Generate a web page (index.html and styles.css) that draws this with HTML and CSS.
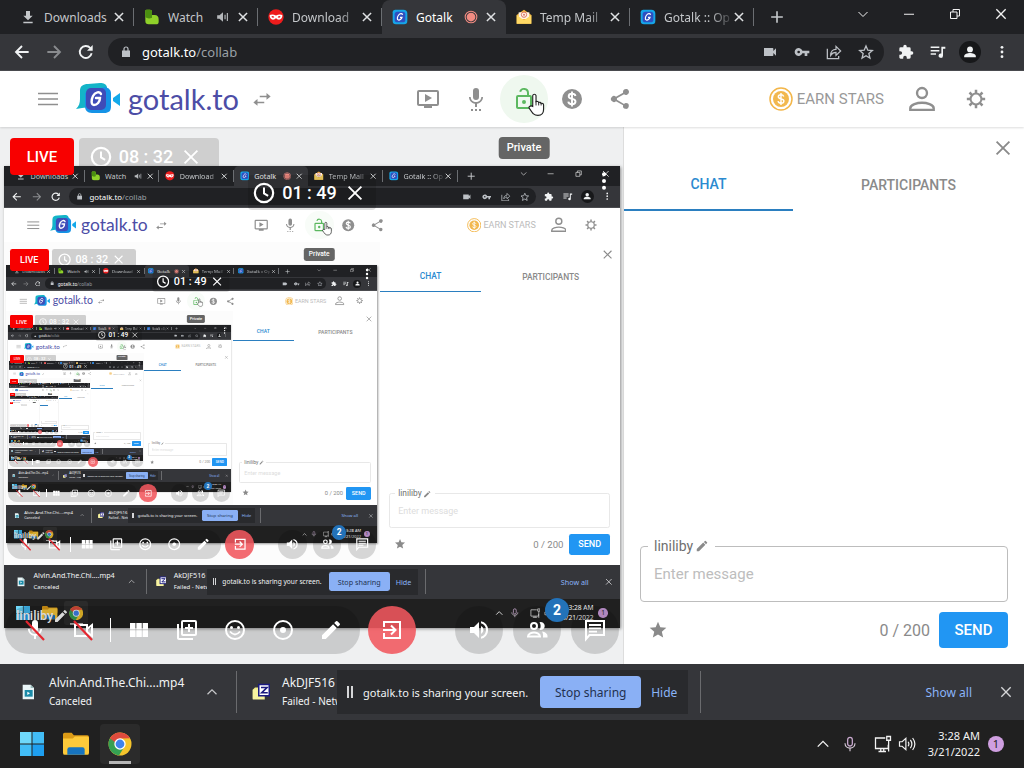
FILE: index.html
```html
<!DOCTYPE html>
<html lang="en">
<head>
<meta charset="utf-8">
<meta name="viewport" content="width=device-width, initial-scale=1">
<title>Gotalk</title>
<link rel="stylesheet" href="styles.css">
</head>
<body>
<svg class="sprite" aria-hidden="true">
  <symbol id="i-x" viewBox="0 0 24 24"><path d="M5 5L19 19M19 5L5 19" fill="none" stroke="currentColor" stroke-width="2.6"/></symbol>
  <symbol id="i-xthin" viewBox="0 0 24 24"><path d="M5 5L19 19M19 5L5 19" fill="none" stroke="currentColor" stroke-width="2"/></symbol>
  <symbol id="i-download" viewBox="0 0 24 24"><path d="M5 19h14v2.5H5zM19 10h-4V3H9v7H5l7 7z" fill="currentColor"/></symbol>
  <symbol id="i-green" viewBox="0 0 24 24"><path d="M2 3q0-2 2-2h5q3 0 3 3v5h4q6 0 6 7v3q0 4-4 4H7q-5 0-5-5z" fill="#8fd12a"/><path d="M2 3q0-2 2-2h5q3 0 3 3v9c-4 2-8 1-10-1z" fill="#4a8f10"/></symbol>
  <symbol id="i-mask" viewBox="0 0 24 24"><circle cx="12" cy="12" r="11.5" fill="#ee1c1c"/><path d="M2.500 9c3-1.500 6-1 9.500.6C15.500 8 18.500 7.500 21.500 9c.5 4-2 7-5 7-2 0-3.200-1-4.500-2.500C10.700 15 9.500 16 7.500 16c-3 0-5.500-3-5-7z" fill="#fff"/><path d="M5 11.500q2.500-2 4.500.8-2.500 1.600-4.500-.8zM14.500 12.300q2-2.800 4.500-.8-2 2.400-4.500.8z" fill="#ee1c1c"/></symbol>
  <symbol id="i-g" viewBox="0 0 24 24"><path d="M1 5q0-4 4-4h12q6 0 6 6v11q0 5-5 5H6q-5 0-5-5z" fill="#16a5e8"/><rect x="4" y="4" width="16" height="16" rx="4" fill="#2f4fc0"/><path d="M16 8.500c-1-2-4-2-6 .5s-3 7-.5 7.500 5-2 5.500-4h-3" fill="none" stroke="#fff" stroke-width="1.800"/></symbol>
  <symbol id="i-mail" viewBox="0 0 24 24"><path d="M1 9L12 1l11 8v13H1z" fill="#f2b63c"/><path d="M4 5h16v10H4z" fill="#fff3e4"/><circle cx="12" cy="8.500" r="4" fill="none" stroke="#d9776b" stroke-width="1.500"/><circle cx="12" cy="8.500" r="1.500" fill="#d9776b"/><path d="M1 9l11 8 11-8v13H1z" fill="#ffd965"/></symbol>
  <symbol id="i-rec" viewBox="0 0 24 24"><circle cx="12" cy="12" r="10" fill="none" stroke="#f28b82" stroke-width="1.800"/><circle cx="12" cy="12" r="7.500" fill="#f28b82"/></symbol>
  <symbol id="i-vol" viewBox="0 0 24 24"><path d="M2 9v6h4l6 5V4L6 9z" fill="currentColor"/><path d="M15.500 8v8M19.500 5v14" stroke="currentColor" stroke-width="2" fill="none"/></symbol>
  <symbol id="i-plus" viewBox="0 0 24 24"><path d="M12 2v20M2 12h20" stroke="currentColor" stroke-width="2.800"/></symbol>
  <symbol id="i-down" viewBox="0 0 24 24"><path d="M3 8l9 9 9-9" fill="none" stroke="currentColor" stroke-width="2"/></symbol>
  <symbol id="i-up" viewBox="0 0 24 24"><path d="M3 16.500l9-9 9 9" fill="none" stroke="currentColor" stroke-width="2.400"/></symbol>
  <symbol id="i-min" viewBox="0 0 24 24"><path d="M2 12.500h20" stroke="currentColor" stroke-width="2"/></symbol>
  <symbol id="i-max" viewBox="0 0 24 24"><path d="M3 8h13v13H3zM8 8V3h13v13h-5" fill="none" stroke="currentColor" stroke-width="2"/></symbol>
  <symbol id="i-back" viewBox="0 0 24 24"><path d="M22 12H3M12 3l-9 9 9 9" fill="none" stroke="currentColor" stroke-width="2.800"/></symbol>
  <symbol id="i-fwd" viewBox="0 0 24 24"><path d="M2 12h19M12 3l9 9-9 9" fill="none" stroke="currentColor" stroke-width="2.800"/></symbol>
  <symbol id="i-reload" viewBox="0 0 24 24"><path d="M20.500 14A9 9 0 1 1 18.500 6" fill="none" stroke="currentColor" stroke-width="2.800"/><path d="M22 1.500V10h-8.500z" fill="currentColor"/></symbol>
  <symbol id="i-lockc" viewBox="0 0 24 24"><path d="M4 9h16v13H4z" fill="currentColor"/><path d="M8 10V6a4 4 0 0 1 8 0v4" fill="none" stroke="currentColor" stroke-width="2.400"/></symbol>
  <symbol id="i-cam" viewBox="0 0 24 24"><path d="M17 10.500V7a1 1 0 0 0-1-1H3v12h13a1 1 0 0 0 1-1v-3.500l4 4v-11z" fill="currentColor"/></symbol>
  <symbol id="i-key" viewBox="0 0 24 24"><path d="M12.600 10A6 6 0 1 0 12.600 14H16v4h4v-4h3v-4zM7 14a2 2 0 1 1 0-4 2 2 0 0 1 0 4z" fill="currentColor"/></symbol>
  <symbol id="i-share" viewBox="0 0 24 24"><path d="M2 7v15h17v-4" fill="none" stroke="currentColor" stroke-width="1.900"/><path d="M7 17c0-6 3-9 8-9V3.500l7 7-7 6.500v-4.500c-4 0-6 1-8 4.500z" fill="none" stroke="currentColor" stroke-width="1.800"/></symbol>
  <symbol id="i-staro" viewBox="0 0 24 24"><path d="M12 3l2.700 6.300 6.800.6-5.200 4.500 1.600 6.700-5.900-3.600-5.900 3.600 1.600-6.700L2.500 9.900l6.800-.6z" fill="none" stroke="currentColor" stroke-width="2"/></symbol>
  <symbol id="i-star" viewBox="0 0 24 24"><path d="M12 17.300L18.200 21l-1.600-7L22 9.200l-7.200-.6L12 2 9.200 8.600 2 9.200 7.500 14l-1.700 7z" fill="currentColor"/></symbol>
  <symbol id="i-puzzle" viewBox="0 0 24 24"><path d="M20.500 11H19V7a2 2 0 0 0-2-2h-4V3.500a2.500 2.500 0 0 0-5 0V5H4a2 2 0 0 0-2 2v3.800h1.500a2.700 2.700 0 0 1 0 5.400H2V20c0 1.100.9 2 2 2h3.800v-1.500a2.700 2.700 0 0 1 5.400 0V22H17a2 2 0 0 0 2-2v-4h1.500a2.500 2.500 0 0 0 0-5z" fill="currentColor"/></symbol>
  <symbol id="i-music" viewBox="0 0 24 24"><path d="M1 5h13M1 10h13M1 15h8" stroke="currentColor" stroke-width="2.200"/><path d="M17 4h6v3h-3.500v10.500a3.300 3.300 0 1 1-2.500-3.200z" fill="currentColor"/></symbol>
  <symbol id="i-user" viewBox="0 0 24 24"><circle cx="12" cy="7.500" r="5" fill="currentColor"/><path d="M2 21v-2c0-4 6-5.500 10-5.500S22 15 22 19v2z" fill="currentColor"/></symbol>
  <symbol id="i-dots" viewBox="0 0 24 24"><circle cx="12" cy="4" r="2.400" fill="currentColor"/><circle cx="12" cy="12" r="2.400" fill="currentColor"/><circle cx="12" cy="20" r="2.400" fill="currentColor"/></symbol>
  <symbol id="i-menu" viewBox="0 0 24 24"><path d="M2 6.500h20M2 12h20M2 17.500h20" stroke="currentColor" stroke-width="1.600"/></symbol>
  <symbol id="i-logo" viewBox="0 0 44 32"><path d="M0 26c3-3 4-6 4-10V8c0-5 3-7 8-7l12-1c4 0 6 1 7 4v18L6 25z" fill="#14b4c8"/><path d="M9 10L29 4c4 1 6 3 6 7v12c0 5-2 7-7 7H16c-5 0-7-3-7-7z" fill="#1593e6"/><path d="M37 15l7-5v13l-7-5z" fill="#13a9ea"/><rect x="10" y="5" width="20" height="22" rx="5" fill="#3f4cb8"/><path d="M25 11c-1-3-6-2-8 2s-2 9 1 9 6-3 6-7h-4" fill="none" stroke="#fff" stroke-width="2.400" stroke-linecap="round"/></symbol>
  <symbol id="i-swap" viewBox="0 0 24 24"><path d="M9 7.500h9V4l5.500 4.500L18 13V9.500H9zM15 17.500H6V21L.5 16.500 6 12v3.500h9z" fill="currentColor"/></symbol>
  <symbol id="i-tv" viewBox="0 0 24 24"><path d="M21 3H3a2 2 0 0 0-2 2v12c0 1.100.9 2 2 2h5v2h8v-2h5a2 2 0 0 0 2-2V5a2 2 0 0 0-2-2zm0 14H3V5h18zM9 7v8l7-4z" fill="currentColor"/></symbol>
  <symbol id="i-mic" viewBox="0 0 24 24"><path d="M12 13a3 3 0 0 0 3-3V4a3 3 0 0 0-6 0v6a3 3 0 0 0 3 3zm5.300-3c0 3-2.500 5.100-5.300 5.100S6.700 13 6.700 10H5c0 3.400 2.700 6.200 6 6.700V20h2v-3.300c3.300-.5 6-3.300 6-6.700zM7 22h2v2H7zm4 0h2v2h-2zm4 0h2v2h-2z" fill="currentColor"/></symbol>
  <symbol id="i-unlock" viewBox="0 0 24 24"><path d="M18 8h-1V6A5 5 0 0 0 7.200 4.600l1.900.5A3 3 0 0 1 15 6v2H6a2 2 0 0 0-2 2v10c0 1.100.9 2 2 2h12a2 2 0 0 0 2-2V10a2 2 0 0 0-2-2zm0 12H6V10h12zm-6-3a2 2 0 1 0 0-4 2 2 0 0 0 0 4z" fill="currentColor"/></symbol>
  <symbol id="i-dollar" viewBox="0 0 24 24"><circle cx="12" cy="12" r="10" fill="currentColor"/><path d="M15.500 9c-.3-1.500-1.600-2.200-3.500-2.200S8.700 7.800 8.700 9.300c0 3.600 6.800 1.700 6.800 5.200 0 1.700-1.500 2.700-3.500 2.700s-3.500-.8-3.700-2.500M12 4.500v15" fill="none" stroke="#fff" stroke-width="1.900"/></symbol>
  <symbol id="i-nodes" viewBox="0 0 24 24"><path d="M18 16.100c-.8 0-1.400.3-2 .8l-7.100-4.200a3 3 0 0 0 0-1.400L16 7.200A3 3 0 1 0 15 5c0 .2 0 .5.100.7L8 9.800a3 3 0 1 0 0 4.400l7.100 4.100a2.900 2.900 0 1 0 2.900-2.200z" fill="currentColor"/></symbol>
  <symbol id="i-coin" viewBox="0 0 24 24"><circle cx="12" cy="12" r="11" fill="none" stroke="#f3b649" stroke-width="1.500"/><circle cx="12" cy="12" r="8" fill="#f2b84e"/><path d="M14.800 9.500c-.5-1.200-1.400-1.700-2.800-1.700s-2.700.7-2.700 2c0 2.900 5.600 1.500 5.600 4.200 0 1.400-1.300 2.200-2.900 2.200s-2.700-.6-3-2M12 6v12" fill="none" stroke="#fff" stroke-width="1.400"/></symbol>
  <symbol id="i-person" viewBox="0 0 24 24"><circle cx="12" cy="6.500" r="4.600" fill="none" stroke="currentColor" stroke-width="2.200"/><path d="M1.200 22v-1.500c0-3.300 6.500-5 10.800-5s10.800 1.700 10.800 5V22z" fill="none" stroke="currentColor" stroke-width="2.200"/></symbol>
  <symbol id="i-gear" viewBox="0 0 24 24"><circle cx="12" cy="12" r="6.500" fill="none" stroke="currentColor" stroke-width="2.400"/><path d="M12 5.500V1M12 23v-4.500M5.500 12H1M23 12h-4.500M7.400 7.400L4.200 4.200M19.800 19.800l-3.200-3.200M7.400 16.600l-3.200 3.200M19.800 4.200l-3.200 3.200" stroke="currentColor" stroke-width="3"/></symbol>
  <symbol id="i-hand" viewBox="0 0 18 26"><path d="M5 15V3.500a1.800 1.800 0 0 1 3.500 0V10l1-.5c1 0 1.600.5 1.800 1.300 1.200-.5 2.200 0 2.500 1 1.500-.4 2.600.4 2.700 1.700V18c0 4-2 6.500-6 6.500-4.500 0-5.500-2-9.500-8 0-1.800 2.200-2.500 4-1.500z" fill="#fff" stroke="#222" stroke-width="1.200"/><path d="M8.500 9.500V14M11.300 10.500V14M13.900 11.500V14" stroke="#222"/></symbol>
  <symbol id="i-clock" viewBox="0 0 24 24"><circle cx="12" cy="12" r="10" fill="none" stroke="currentColor" stroke-width="2.400"/><path d="M12 6v6.500l4.500 2.700" fill="none" stroke="currentColor" stroke-width="2.200"/></symbol>
  <symbol id="i-pencil" viewBox="0 0 24 24"><path d="M3 17.200V21h3.800L17.800 9.900l-3.700-3.700zM20.700 7a1 1 0 0 0 0-1.400l-2.300-2.300a1 1 0 0 0-1.400 0l-1.800 1.800 3.700 3.700z" fill="currentColor"/></symbol>
  <symbol id="i-micoff" viewBox="0 0 24 24"><path d="M12 14a3 3 0 0 0 3-3V5a3 3 0 0 0-6 0v6a3 3 0 0 0 3 3zm5.300-3c0 3-2.500 5.100-5.300 5.100S6.700 14 6.700 11H5c0 3.400 2.700 6.200 6 6.700V21h2v-3.300c3.300-.5 6-3.300 6-6.700z" fill="currentColor"/><path d="M3 3l18 19" stroke="#e5262f" stroke-width="2.200"/></symbol>
  <symbol id="i-camoff" viewBox="0 0 24 24"><path d="M4 7h12v11H4zM16 11l5-4v11l-5-4" fill="none" stroke="currentColor" stroke-width="2"/><path d="M3 3l18 19" stroke="#e5262f" stroke-width="2.200"/></symbol>
  <symbol id="i-grid" viewBox="0 0 24 24"><path d="M3 5h5.500v6.500H3zM9.300 5h5.500v6.500H9.300zM15.600 5H21v6.500h-5.400zM3 12.300h5.500V19H3zM9.300 12.300h5.500V19H9.300zM15.600 12.300H21V19h-5.400z" fill="currentColor"/></symbol>
  <symbol id="i-addlib" viewBox="0 0 24 24"><path d="M4 6H2v14c0 1.100.9 2 2 2h14v-2H4zm16-4H8a2 2 0 0 0-2 2v12c0 1.100.9 2 2 2h12a2 2 0 0 0 2-2V4a2 2 0 0 0-2-2zm0 14H8V4h12zm-7-2h2v-3h3V9h-3V6h-2v3h-3v2h3z" fill="currentColor"/></symbol>
  <symbol id="i-smile" viewBox="0 0 24 24"><circle cx="12" cy="12" r="9" fill="none" stroke="currentColor" stroke-width="2"/><circle cx="8.500" cy="9.500" r="1.500" fill="currentColor"/><circle cx="15.500" cy="9.500" r="1.500" fill="currentColor"/><path d="M7 13.500q5 6 10 0" fill="none" stroke="currentColor" stroke-width="1.800"/></symbol>
  <symbol id="i-target" viewBox="0 0 24 24"><circle cx="12" cy="12" r="9" fill="none" stroke="currentColor" stroke-width="2"/><circle cx="12" cy="12" r="3" fill="currentColor"/></symbol>
  <symbol id="i-exit" viewBox="0 0 24 24"><path d="M4 9V4h16v16H4v-5" fill="none" stroke="currentColor" stroke-width="2"/><path d="M3 12h12M11 7.500l4.500 4.500-4.500 4.500" fill="none" stroke="currentColor" stroke-width="2"/></symbol>
  <symbol id="i-sound" viewBox="0 0 24 24"><path d="M3 9v6h4l5 5V4L7 9zm13.500 3A4.500 4.500 0 0 0 14 8v8a4.500 4.500 0 0 0 2.500-4zM14 3.200v2.100a7 7 0 0 1 0 13.400v2.100a9 9 0 0 0 0-17.600z" fill="currentColor"/></symbol>
  <symbol id="i-people" viewBox="0 0 24 24"><circle cx="9" cy="8" r="3" fill="none" stroke="currentColor" stroke-width="2"/><path d="M3 18.500c0-3 4-4 6-4s6 1 6 4z" fill="none" stroke="currentColor" stroke-width="2"/><path d="M14.500 4.200a4 4 0 1 1 0 7.600c1.500-2.200 1.500-5.400 0-7.600zM17 13.500c3 .6 5.500 2 5.500 4.500v1.500H18c.3-2.500 0-4.500-1-6z" fill="currentColor"/></symbol>
  <symbol id="i-chat" viewBox="0 0 24 24"><path d="M3 21V3h18v14H6.500z" fill="none" stroke="currentColor" stroke-width="2"/><path d="M6 7h12M6 10.300h12M6 13.600h8" stroke="currentColor" stroke-width="1.800"/></symbol>
  <symbol id="i-file" viewBox="0 0 24 24"><path d="M4 1h12l5 5v17H4z" fill="#eaf6f8"/><path d="M16 1v5h5z" fill="#9bb"/><rect x="7" y="9" width="12" height="10" fill="#1b8ba8"/><path d="M11 11.500v5l4-2.500z" fill="#fff"/></symbol>
  <symbol id="i-zip" viewBox="0 0 24 24"><path d="M1 9l3-3h8v15H1z" fill="#f3ef8e"/><path d="M1 9h16v13H1z" fill="#f7f3a0"/><rect x="9" y="2" width="14" height="15" fill="#fff" stroke="#1b1b80" stroke-width="2"/><path d="M12 6h8l-7 7h8" fill="none" stroke="#1b1b80" stroke-width="2.200"/></symbol>
  <symbol id="i-win" viewBox="0 0 24 24"><path d="M0 0h11.500v11.500H0z" fill="#6fd8fa"/><path d="M12.500 0H24v11.500H12.500zM0 12.500h11.500V24H0z" fill="#42bdf6"/><path d="M12.500 12.500H24V24H12.500z" fill="#1e9ff0"/></symbol>
  <symbol id="i-folder" viewBox="0 0 24 24"><path d="M0 3q0-1.500 1.500-1.500H8L10 4h12.500Q24 4 24 5.500V12H0z" fill="#dc9b16"/><path d="M0 7h9l2-2h11.500Q24 5 24 6.500V20q0 2-1.500 2h-21Q0 22 0 20z" fill="#fdca3a"/><path d="M4 22v-5q0-2 2-2h12q2 0 2 2v5z" fill="#1774bf"/></symbol>
  <symbol id="i-chrome" viewBox="0 0 24 24"><circle cx="12" cy="12" r="11.500" fill="#f5c42c"/><path d="M2 6.200A11.500 11.500 0 0 0 11 23.400l5.500-9L12 12z" fill="#35a153"/><path d="M2 6.200A11.500 11.500 0 0 1 22 6.300L12 6.500 7.500 11 6 13z" fill="#df4b3d"/><path d="M2 6.200L7 15l2-3z" fill="#35a153"/><circle cx="12" cy="12" r="5.700" fill="#fff"/><circle cx="12" cy="12" r="4.400" fill="#3f83ec"/></symbol>
  <symbol id="i-tmic" viewBox="0 0 24 24"><rect x="8.500" y="2" width="7" height="13" rx="3.500" fill="none" stroke="#c9a9cf" stroke-width="1.900"/><path d="M4.500 11c0 9.500 15 9.500 15 0M12 18.500V23" fill="none" stroke="#d8cdda" stroke-width="1.700"/></symbol>
  <symbol id="i-net" viewBox="0 0 24 24"><path d="M15 4H2v14h17v-5M6 22h10M9 18v4M13 18v4M17 2h5v5h-5zM19.500 7v15" fill="none" stroke="currentColor" stroke-width="1.700"/></symbol>
  <symbol id="i-tvol" viewBox="0 0 24 24"><path d="M2 9v6h3.500l5 4.500v-15L5.500 9z" fill="none" stroke="currentColor" stroke-width="1.600"/><path d="M13.500 9q2 3 0 6M16.500 6.500q4 5.500 0 11M19.500 4q6 8 0 16" fill="none" stroke="currentColor" stroke-width="1.600"/></symbol>
</svg>

<div class="screen">
  <div class="tabs">
    <div class="tab"><svg class="s16"><use href="#i-download"/></svg><span class="tab-title">Downloads</span><button class="tab-x" aria-label="Close tab"><svg class="s14"><use href="#i-x"/></svg></button></div>
    <div class="tab"><svg class="s16"><use href="#i-green"/></svg><span class="tab-title">Watch</span><svg class="s14 dim"><use href="#i-vol"/></svg><button class="tab-x" aria-label="Close tab"><svg class="s14"><use href="#i-x"/></svg></button></div>
    <div class="tab"><svg class="s16"><use href="#i-mask"/></svg><span class="tab-title fade">Download</span><button class="tab-x" aria-label="Close tab"><svg class="s14"><use href="#i-x"/></svg></button></div>
    <div class="tab active"><svg class="s16"><use href="#i-g"/></svg><span class="tab-title">Gotalk</span><svg class="s14"><use href="#i-rec"/></svg><button class="tab-x" aria-label="Close tab"><svg class="s14"><use href="#i-x"/></svg></button></div>
    <div class="tab"><svg class="s16"><use href="#i-mail"/></svg><span class="tab-title fade">Temp Mail</span><button class="tab-x" aria-label="Close tab"><svg class="s14"><use href="#i-x"/></svg></button></div>
    <div class="tab"><svg class="s16"><use href="#i-g"/></svg><span class="tab-title fade">Gotalk :: Op</span><button class="tab-x" aria-label="Close tab"><svg class="s14"><use href="#i-x"/></svg></button></div>
    <button class="newtab" aria-label="New tab"><svg class="s14"><use href="#i-plus"/></svg></button>
    <div class="win">
      <button aria-label="Search tabs"><svg class="s12"><use href="#i-down"/></svg></button>
      <button aria-label="Minimize"><svg class="s12"><use href="#i-min"/></svg></button>
      <button aria-label="Restore"><svg class="s12"><use href="#i-max"/></svg></button>
      <button aria-label="Close window"><svg class="s16"><use href="#i-xthin"/></svg></button>
    </div>
  </div>

  <div class="bar">
    <button aria-label="Back"><svg class="s16"><use href="#i-back"/></svg></button>
    <button class="off" aria-label="Forward"><svg class="s16"><use href="#i-fwd"/></svg></button>
    <button aria-label="Reload"><svg class="s16"><use href="#i-reload"/></svg></button>
    <div class="omni">
      <svg class="s12"><use href="#i-lockc"/></svg>
      <span class="url">gotalk.to<span class="path">/collab</span></span>
      <button aria-label="Camera in use"><svg class="s16"><use href="#i-cam"/></svg></button>
      <button aria-label="Passwords"><svg class="s16"><use href="#i-key"/></svg></button>
      <button aria-label="Share page"><svg class="s16"><use href="#i-share"/></svg></button>
      <button aria-label="Bookmark"><svg class="s16"><use href="#i-staro"/></svg></button>
    </div>
    <button aria-label="Extensions"><svg class="s16"><use href="#i-puzzle"/></svg></button>
    <button aria-label="Media"><svg class="s16"><use href="#i-music"/></svg></button>
    <button class="avatar" aria-label="Profile"><svg class="s14"><use href="#i-user"/></svg></button>
    <button aria-label="Menu"><svg class="s14"><use href="#i-dots"/></svg></button>
  </div>

  <header class="head">
    <div class="brand">
      <button aria-label="Open menu"><svg class="s24"><use href="#i-menu"/></svg></button>
      <a class="logo" href="#"><svg class="logo-mark"><use href="#i-logo"/></svg><span>gotalk.to</span></a>
      <button aria-label="Switch"><svg class="s18"><use href="#i-swap"/></svg></button>
    </div>
    <nav class="actions">
      <button aria-label="Watch video"><svg class="s24"><use href="#i-tv"/></svg></button>
      <button aria-label="Voice settings"><svg class="s24"><use href="#i-mic"/></svg></button>
      <button class="private" aria-label="Room privacy"><svg class="s24"><use href="#i-unlock"/></svg><svg class="cursor"><use href="#i-hand"/></svg><span class="tip">Private</span></button>
      <button aria-label="Donate"><svg class="s24"><use href="#i-dollar"/></svg></button>
      <button aria-label="Share room"><svg class="s24"><use href="#i-nodes"/></svg></button>
    </nav>
    <div class="account">
      <button class="earn"><svg class="s24"><use href="#i-coin"/></svg>EARN STARS</button>
      <button aria-label="Account"><svg class="s26"><use href="#i-person"/></svg></button>
      <button aria-label="Settings"><svg class="s20"><use href="#i-gear"/></svg></button>
    </div>
  </header>

  <main class="room">
    <section class="stage">
      <div class="elapsed"><svg class="s22"><use href="#i-clock"/></svg><span>08 : 32</span><svg class="s22"><use href="#i-xthin"/></svg></div>
      <div class="share"></div>
      <button class="live">LIVE</button>
      <div class="timer"><svg class="s22"><use href="#i-clock"/></svg><span>01 : 49</span><svg class="s22"><use href="#i-xthin"/></svg></div>
      <button class="more" aria-label="More"><svg class="s20"><use href="#i-dots"/></svg></button>
      <div class="who">liniliby<svg class="s16"><use href="#i-pencil"/></svg></div>
      <div class="controls">
        <div class="pill">
          <button aria-label="Unmute"><svg class="s24"><use href="#i-micoff"/></svg></button>
          <button aria-label="Start camera"><svg class="s24"><use href="#i-camoff"/></svg></button>
          <span class="split"></span>
          <button aria-label="Layout"><svg class="s24"><use href="#i-grid"/></svg></button>
          <button aria-label="Add media"><svg class="s24"><use href="#i-addlib"/></svg></button>
          <button aria-label="Reactions"><svg class="s24"><use href="#i-smile"/></svg></button>
          <button aria-label="Record"><svg class="s24"><use href="#i-target"/></svg></button>
          <button aria-label="Draw"><svg class="s24"><use href="#i-pencil"/></svg></button>
        </div>
        <button class="leave" aria-label="Leave"><svg class="s24"><use href="#i-exit"/></svg></button>
        <div class="rounds">
          <button aria-label="Volume"><svg class="s24"><use href="#i-sound"/></svg></button>
          <button class="counted" aria-label="Participants"><svg class="s24"><use href="#i-people"/></svg><span class="count">2</span></button>
          <button aria-label="Chat"><svg class="s24"><use href="#i-chat"/></svg></button>
        </div>
      </div>
    </section>

    <aside class="chat">
      <div class="chat-top"><button aria-label="Close chat"><svg class="s22"><use href="#i-xthin"/></svg></button></div>
      <div class="chat-tabs"><button class="on">CHAT</button><button>PARTICIPANTS</button></div>
      <div class="messages"></div>
      <form class="compose">
        <fieldset>
          <legend><label for="message">liniliby</label><svg class="s14"><use href="#i-pencil"/></svg></legend>
          <input id="message" type="text" placeholder="Enter message">
        </fieldset>
        <div class="send-row">
          <svg class="s20"><use href="#i-star"/></svg>
          <span class="left">0 / 200</span>
          <button type="button" class="send">SEND</button>
        </div>
      </form>
    </aside>
  </main>

  <div class="shelf">
    <div class="item"><svg class="s16"><use href="#i-file"/></svg><div class="file"><span>Alvin.And.The.Chi....mp4</span><small>Canceled</small></div><button aria-label="File options"><svg class="s12"><use href="#i-up"/></svg></button></div>
    <div class="item cut"><svg class="s18"><use href="#i-zip"/></svg><div class="file"><span>AkDJF516</span><small>Failed - Netw</small></div></div>
    <div class="sharing"><span class="pause"></span><span class="sharing-text">gotalk.to is sharing your screen.</span><button class="stop">Stop sharing</button><button class="hide">Hide</button></div>
    <span class="rule"></span>
    <button class="all">Show all</button>
    <button class="shelf-x" aria-label="Close downloads"><svg class="s16"><use href="#i-xthin"/></svg></button>
  </div>

  <div class="taskbar">
    <button aria-label="Start"><svg class="s24"><use href="#i-win"/></svg></button>
    <button aria-label="Files"><svg class="s26"><use href="#i-folder"/></svg></button>
    <button class="running" aria-label="Chrome"><svg class="s24"><use href="#i-chrome"/></svg></button>
    <div class="tray">
      <svg class="s14"><use href="#i-up"/></svg>
      <svg class="s16"><use href="#i-tmic"/></svg>
      <svg class="s18 net"><use href="#i-net"/></svg>
      <svg class="s18 vol"><use href="#i-tvol"/></svg>
      <div class="clock"><span>3:28 AM</span><span>3/21/2022</span></div>
      <span class="note">1</span>
    </div>
  </div>
</div>
<script src="mirror.js"></script>
</body>
</html>
```

FILE: styles.css
```css
* { box-sizing: border-box; }
html, body { height: 100%; }
body { margin: 0; overflow: hidden; font-family: Roboto, "Liberation Sans", sans-serif; background: #202020; }
button { margin: 0; padding: 0; border: 0; background: none; color: inherit; font: inherit; display: flex; align-items: center; justify-content: center; flex: none; cursor: pointer; }
svg { display: block; flex: none; }
.sprite { position: absolute; width: 0; height: 0; }
.s12 { width: 12px; height: 12px; }
.s14 { width: 14px; height: 14px; }
.s16 { width: 16px; height: 16px; }
.s18 { width: 18px; height: 18px; }
.s20 { width: 20px; height: 20px; }
.s22 { width: 22px; height: 22px; }
.s24 { width: 24px; height: 24px; }
.s26 { width: 26px; height: 26px; }

.screen { height: 100%; display: flex; flex-direction: column; background: #fff; overflow: hidden; }

/* Browser tabs */
.tabs { flex: none; height: 34px; padding-left: 10px; display: flex; align-items: stretch; background: #202124; color: #c4c7ca; font: 12px "Noto Sans", sans-serif; }
.tab { flex: 0 1 124px; min-width: 0; padding: 0 7px 0 10px; display: flex; align-items: center; border-right: 1px solid transparent; border-image: linear-gradient(transparent 24%, #6b6e72 24%, #6b6e72 76%, transparent 76%) 1; }
.tab.active { background: #35363a; color: #fff; border-image: none; border-radius: 8px 8px 0 0; }
.tab-title { flex: 1; min-width: 0; margin: 0 2px 0 8px; overflow: hidden; white-space: nowrap; }
.fade { mask-image: linear-gradient(to right, #000 70%, #0003); }
.tab-x { margin-left: 6px; color: #dfe1e3; }
.tab-title + .tab-x { margin-left: 0; }
.dim { color: #b5b8bb; }
.newtab { width: 46px; }
.win { margin-left: auto; display: flex; color: #f1f1f1; padding-bottom: 6px; }
.win button { width: 46px; }

/* Address bar */
.bar { flex: none; height: 37px; padding: 0 6px; display: flex; align-items: center; background: #35363a; border-bottom: 1px solid #4a4b4f; color: #f1f3f4; }
.bar button { width: 32px; height: 28px; }
.bar .off { color: #898b8e; }
.omni { flex: 1; min-width: 0; height: 28px; margin: 0 6px; padding: 0 2px 0 12px; display: flex; align-items: center; border-radius: 14px; background: #202124; color: #bdc1c6; }
.url { flex: 1; min-width: 0; padding-left: 10px; color: #fff; font: 13px "Noto Sans", sans-serif; white-space: nowrap; overflow: hidden; }
.path { color: #9aa0a6; }
.bar .avatar { width: 22px; height: 22px; margin: 0 5px; border-radius: 50%; background: #17181a; }

/* Site header */
.head { flex: none; height: 56px; padding: 0 24px 0 36px; display: flex; align-items: center; color: #8f8f8f; background: #fff; box-shadow: 0 1px 2px #0002; position: relative; z-index: 2; }
.brand { flex: 1 1 0; margin-right: 12px; display: flex; align-items: center; }
.logo { margin: 0 14px 0 16px; display: flex; align-items: center; gap: 8px; color: #4c4da6; font: 29px Lato, sans-serif; text-decoration: none; }
.logo-mark { width: 44px; height: 32px; }
.logo span { padding-bottom: 2px; }
.actions { display: flex; }
.actions button { width: 48px; height: 48px; border-radius: 50%; }
.actions .private { position: relative; color: #5cb860; background: #eff8ef; }
.cursor { position: absolute; left: 28px; top: 17px; width: 17px; height: 25px; }
.tip { position: absolute; top: 62px; left: 50%; translate: -50% 0; padding: 0 8px; line-height: 22px; border-radius: 4px; background: #656565; color: #fff; font-size: 11px; font-weight: 500; }
.account { flex: 1 1 0; display: flex; align-items: center; justify-content: flex-end; }
.account button { width: 60px; height: 48px; }
.account button:last-child { width: 48px; }
.account .earn { width: auto; margin-right: 8px; gap: 4px; font-size: 15px; color: #999; white-space: nowrap; }

/* Room */
.room { flex: 1; min-height: 0; display: flex; }
.stage { flex: 1; min-width: 0; position: relative; padding: 2px 3px 0 4px; display: flex; align-items: center; background: #eff0f1; }
.share { flex: 1; min-width: 0; overflow: hidden; background: #fff; box-shadow: 1px 1px 3px #0006; z-index: 0; }
.share .stage { background: #fcfcfc; }
.share .chat { border-color: #fcfcfc; }
.share .head { box-shadow: none; }
.share .private { background: #f8fcf8; }
.share .earn { color: #bbb; }
.share fieldset { border-color: #e8e8e8; }
.live { position: absolute; left: 10px; top: 11px; width: 64px; height: 37px; border-radius: 4px; background: #f80000; color: #fff; font-size: 15px; font-weight: 500; }
.elapsed, .timer { position: absolute; display: flex; align-items: center; justify-content: center; gap: 7px; color: #fff; font-size: 18px; font-weight: 500; border-radius: 4px; white-space: nowrap; }
.elapsed { left: 79px; top: 11px; width: 140px; height: 37px; padding-right: 6px; background: #cfcfcf; }
.timer { left: 50%; top: 48px; width: 128px; height: 35px; padding-right: 4px; translate: -50% 0; background: #0000001f; }
.more { position: absolute; right: 9px; top: 44px; color: #fff; }
.who { position: absolute; left: 16px; bottom: 40px; display: flex; align-items: center; color: #fff; font-size: 13px; font-weight: 500; line-height: 16px; }
.controls { position: absolute; left: 5px; right: 4px; bottom: 10px; display: flex; gap: 8px; color: #fff; }
.controls button { width: 48px; height: 48px; border-radius: 50%; }
.pill { display: flex; align-items: center; padding: 0 5px 0 6px; border-radius: 24px; background: #00000026; }
.split { width: 1px; height: 24px; margin: 0 4px 0 3px; background: #fff; }
.controls .leave { background: #f1575de0; }
.rounds { margin-left: auto; display: flex; gap: 10px; }
.rounds button { background: #00000026; }
.counted { position: relative; }
.count { position: absolute; left: 32px; top: -8px; width: 24px; height: 24px; border-radius: 50%; background: #2372b9; font-size: 14px; font-weight: 700; line-height: 24px; }

/* Chat panel */
.chat { flex: none; width: 401px; display: flex; flex-direction: column; border-left: 1px solid #ddd; background: #fff; color: #8a8a8a; }
.chat-top { padding: 10px 10px 0; display: flex; justify-content: flex-end; }
.chat-tabs { display: flex; height: 52px; font-size: 14px; font-weight: 500; }
.chat-tabs button { flex: 231 1 0; }
.chat-tabs .on { flex-grow: 169; color: #2b8ad0; border-bottom: 2px solid #2b7fc0; }
.messages { flex: 1; }
.compose { padding: 0 16px 16px; }
fieldset { margin: 0; min-width: 0; padding: 0 13px; height: 64px; border: 1px solid #bdbdbd; border-radius: 4px; }
legend { margin-left: -6px; padding: 0 6px; display: flex; align-items: center; gap: 2px; font-size: 14px; line-height: 16px; color: #6f6f6f; }
legend svg { color: #8a8a8a; }
input { display: block; width: 100%; height: 40px; padding: 0; border: 0; outline: 0; background: none; font: 15px Roboto, sans-serif; color: #444; }
input::placeholder { color: #bdbdbd; opacity: 1; }
.share input::placeholder { color: #ddd; }
.send-row { margin-top: 10px; padding-left: 8px; display: flex; align-items: center; }
.left { margin: 0 9px 0 auto; font-size: 16px; }
.send { width: 69px; height: 36px; border-radius: 4px; background: #2196f3; color: #fff; font-size: 15px; font-weight: 500; }

/* Downloads shelf */
.shelf { flex: none; height: 56px; display: flex; align-items: center; background: #35363a; color: #f1f3f4; font-family: "Noto Sans", sans-serif; }
.item { flex: none; width: 237px; height: 42px; padding: 0 18px 0 20px; display: flex; align-items: center; gap: 13px; border-right: 1px solid #6a6b6e; }
.item button { margin-left: auto; color: #c8c9cb; }
.item.cut { width: 100px; padding: 0 0 0 15px; gap: 12px; overflow: hidden; border: 0; }
.file { display: flex; flex-direction: column; font-size: 12px; line-height: 19px; white-space: nowrap; }
.file small { font-size: 10px; }
.sharing { flex: none; height: 44px; padding: 0 11px 0 10px; display: flex; align-items: center; background: #292a2d; font-size: 12px; white-space: nowrap; }
.pause { width: 6px; height: 12px; margin-right: 10px; border: solid #d5d6d8; border-width: 0 2px; }
.sharing-text { margin-right: 12px; font-size: 11px; }
.stop { width: 101px; height: 32px; border-radius: 4px; background: #8ab0f5; color: #223050; }
.hide { margin-left: 10px; color: #8ab4f8; }
.rule { width: 1px; height: 42px; margin: 0 12px; background: #6a6b6e; }
.all { margin-left: auto; color: #8ab4f8; font-size: 12px; }
.shelf-x { margin: 0 10px 0 26px; color: #d4d5d7; }

/* Taskbar */
.taskbar { flex: none; height: 48px; padding: 0 20px 0 12px; display: flex; align-items: center; gap: 4px; background: #202020; color: #f2f2f2; font: 12px "Noto Sans", sans-serif; }
.taskbar button { width: 40px; height: 40px; border-radius: 4px; }
.taskbar .running { background: linear-gradient(#b5b5b5, #b5b5b5) 50% 100% / 22px 3px no-repeat, #2b2b2b; }
.tray { margin-left: auto; display: flex; align-items: center; gap: 12px; }
.net { margin-left: 4px; }
.vol { margin-left: -6px; }
.clock { display: flex; flex-direction: column; align-items: flex-end; line-height: 16px; font-size: 11px; }
.note { width: 16px; height: 16px; margin-left: -4px; border-radius: 50%; background: #cf9fe0; color: #222; font-size: 11px; line-height: 16px; text-align: center; }
```

FILE: mirror.js
```js
// The shared window shows the screen itself, so each level holds a smaller copy.
const LEVELS = 6;
const root = document.querySelector('.screen');
const slot = root.querySelector('.share');
slot.style.aspectRatio = innerWidth + ' / ' + innerHeight;
const scale = slot.clientWidth / innerWidth;
const blank = root.cloneNode(true);

let target = slot;
for (let level = 1; level <= LEVELS; level++) {
  const copy = blank.cloneNode(true);
  copy.inert = true;
  copy.setAttribute('aria-hidden', 'true');
  copy.style.width = innerWidth + 'px';
  copy.style.height = innerHeight + 'px';
  copy.style.zoom = scale;
  const id = 'message-' + level;
  copy.querySelector('input').id = id;
  copy.querySelector('label').htmlFor = id;
  target.append(copy);
  target = copy.querySelector('.share');
}
```
